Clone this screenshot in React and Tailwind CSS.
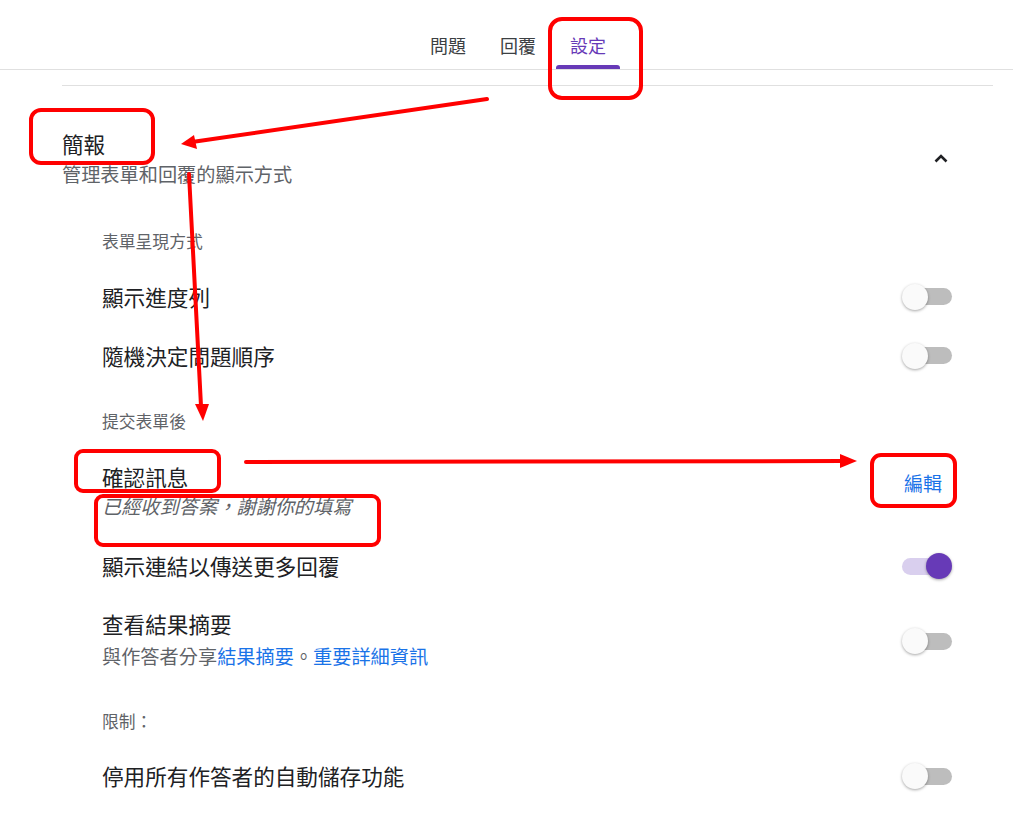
import React from "react";

const font = { fontFamily: '"Noto Sans CJK TC", "Noto Sans", sans-serif' };

function Toggle({ on = false }) {
  return (
    <div className="relative w-[50px] h-[26px] shrink-0">
      <div
        className={
          "absolute top-[4.5px] h-[17px] w-[40px] rounded-full " +
          (on ? "left-0 bg-[#d9cfee]" : "right-0 bg-[#bdbdbd]")
        }
      />
      <div
        className={
          "absolute top-0 h-[26px] w-[26px] rounded-full shadow-[0_1px_3px_rgba(0,0,0,0.35)] " +
          (on ? "right-0 bg-[#673ab7]" : "left-0 bg-[#fafafa]")
        }
      />
    </div>
  );
}

function Annotations() {
  const red = "#ff0000";
  return (
    <svg
      className="absolute left-0 top-0 pointer-events-none"
      width="1013"
      height="819"
      viewBox="0 0 1013 819"
    >
      <g fill="none" stroke={red} strokeWidth="4" strokeLinecap="round" strokeLinejoin="round">
        <rect x="550" y="19" width="91" height="79" rx="12" />
        <rect x="31" y="110" width="122" height="53" rx="10" />
        <rect x="76" y="451" width="143" height="40" rx="7" />
        <rect x="96" y="496" width="283" height="49" rx="7" />
        <rect x="872" y="455" width="83" height="51" rx="9" />
        <line x1="487" y1="99" x2="192" y2="142" />
        <line x1="189" y1="174" x2="201" y2="406" />
        <line x1="246" y1="462" x2="842" y2="461" />
      </g>
      <g fill={red}>
        <polygon points="181,144 194,135 197,149" />
        <polygon points="203,421 195,404 209,404" />
        <polygon points="857,461 840,454 840,468" />
      </g>
    </svg>
  );
}

export default function App() {
  return (
    <div className="relative w-[1013px] h-[819px] bg-white overflow-hidden text-[#202124]" style={font}>
      {/* Header tabs */}
      <div className="h-[70px] border-b border-[#e0e0e0] flex justify-center pl-[23px]">
        {["問題", "回覆", "設定"].map((t, i) => (
          <div key={t} className="relative w-[70px] h-[69px] flex justify-center">
            <span
              className={
                "mt-[32px] text-[18px] leading-[26px] " +
                (i === 2 ? "text-[#673ab7]" : "text-[#3c4043]")
              }
            >
              {t}
            </span>
            {i === 2 && (
              <div className="absolute bottom-0 left-[3px] w-[64px] h-[4px] rounded-t-[3px] bg-[#673ab7]" />
            )}
          </div>
        ))}
      </div>

      {/* Content */}
      <div className="ml-[62px] w-[931px] mt-[15px] border-t border-[#e0e0e0]">
        {/* Section header */}
        <div className="flex justify-between items-start pt-[43px]">
          <div>
            <div className="text-[21.6px] leading-[30px] text-[#202124]">簡報</div>
            <div className="text-[19.2px] leading-[30px] text-[#5f6368]">管理表單和回覆的顯示方式</div>
          </div>
          <svg className="mt-[18px] mr-[40px]" width="24" height="24" viewBox="0 0 24 24">
            <path d="M6.5 14.5l5.5-5.5 5.5 5.5" fill="none" stroke="#202124" strokeWidth="2.6" />
          </svg>
        </div>

        <div className="pl-[40px] pr-[41px]">
          <div className="mt-[40px] text-[16.8px] leading-[24px] text-[#5f6368]">表單呈現方式</div>

          <div className="mt-[14px] h-[59px] flex items-center justify-between">
            <span className="text-[21.6px] leading-[30px]">顯示進度列</span>
            <Toggle />
          </div>
          <div className="h-[59px] flex items-center justify-between">
            <span className="text-[21.6px] leading-[30px]">隨機決定問題順序</span>
            <Toggle />
          </div>

          <div className="mt-[24px] text-[16.8px] leading-[24px] text-[#5f6368]">提交表單後</div>

          <div className="mt-[29px] flex justify-between items-start">
            <div>
              <div className="text-[21.6px] leading-[30px]">確認訊息</div>
              <div className="text-[19.2px] leading-[28px] italic text-[#5f6368]">已經收到答案，謝謝你的填寫</div>
            </div>
            <span className="mt-[9px] mr-[10px] text-[19px] leading-[24px] text-[#1a73e8]">編輯</span>
          </div>

          <div className="mt-[31px] flex items-center justify-between">
            <span className="text-[21.6px] leading-[30px]">顯示連結以傳送更多回覆</span>
            <Toggle on />
          </div>

          <div className="mt-[28px] flex items-center justify-between">
            <div>
              <div className="text-[21.6px] leading-[30px]">查看結果摘要</div>
              <div className="text-[19.2px] leading-[34px] text-[#5f6368]">
                與作答者分享<span className="text-[#1a73e8]">結果摘要</span>。
                <span className="text-[#1a73e8]">重要詳細資訊</span>
              </div>
            </div>
            <Toggle />
          </div>

          <div className="mt-[36px] text-[16.8px] leading-[24px] text-[#5f6368]">限制：</div>

          <div className="mt-[28px] flex items-center justify-between">
            <span className="text-[21.6px] leading-[30px]">停用所有作答者的自動儲存功能</span>
            <Toggle />
          </div>
        </div>
      </div>

      <Annotations />
    </div>
  );
}
